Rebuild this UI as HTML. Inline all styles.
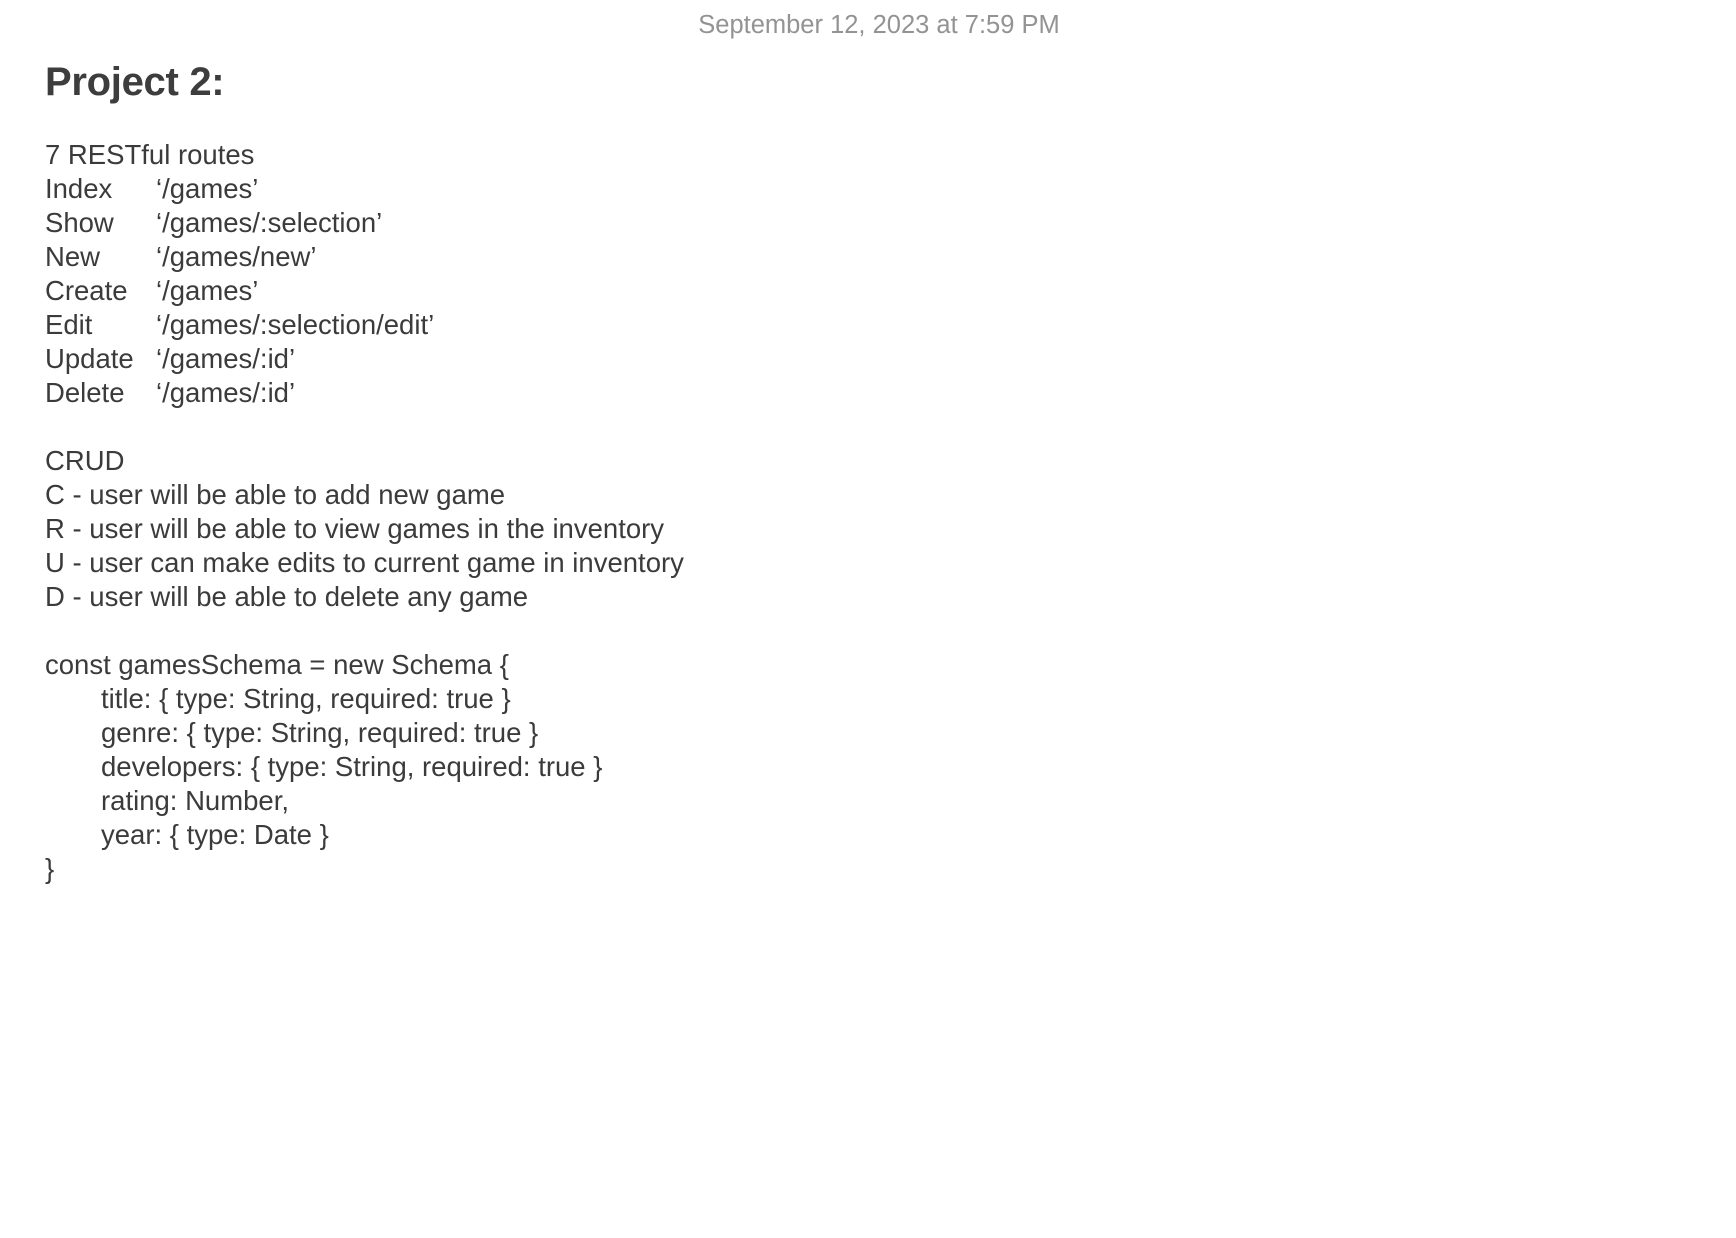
<!DOCTYPE html>
<html><head><meta charset="utf-8"><style>
html,body{margin:0;padding:0;background:#fff;width:1736px;height:1238px;overflow:hidden}
body{font-family:"Liberation Sans",sans-serif;color:#3b3b3b;position:relative}
.date{position:absolute;top:11px;left:0;width:1758px;text-align:center;font-size:25.5px;color:#939393}
h1{position:absolute;left:45px;top:60px;margin:0;font-size:40px;font-weight:bold;color:#3d3d3d;letter-spacing:-0.3px}
.body{position:absolute;left:45px;top:138px;font-size:27.5px;line-height:34px;white-space:pre}
.c{display:inline-block;width:111px}
.i{display:inline-block;width:56px}
</style></head><body>
<div class="date">September 12, 2023 at 7:59 PM</div>
<h1>Project 2:</h1>
<div class="body">7 RESTful routes
<span class="c">Index</span>‘/games’
<span class="c">Show</span>‘/games/:selection’
<span class="c">New</span>‘/games/new’
<span class="c">Create</span>‘/games’
<span class="c">Edit</span>‘/games/:selection/edit’
<span class="c">Update</span>‘/games/:id’
<span class="c">Delete</span>‘/games/:id’

CRUD
C - user will be able to add new game
R - user will be able to view games in the inventory
U - user can make edits to current game in inventory
D - user will be able to delete any game

const gamesSchema = new Schema {
<span class="i"></span>title: { type: String, required: true }
<span class="i"></span>genre: { type: String, required: true }
<span class="i"></span>developers: { type: String, required: true }
<span class="i"></span>rating: Number,
<span class="i"></span>year: { type: Date }
}</div>
</body></html>
